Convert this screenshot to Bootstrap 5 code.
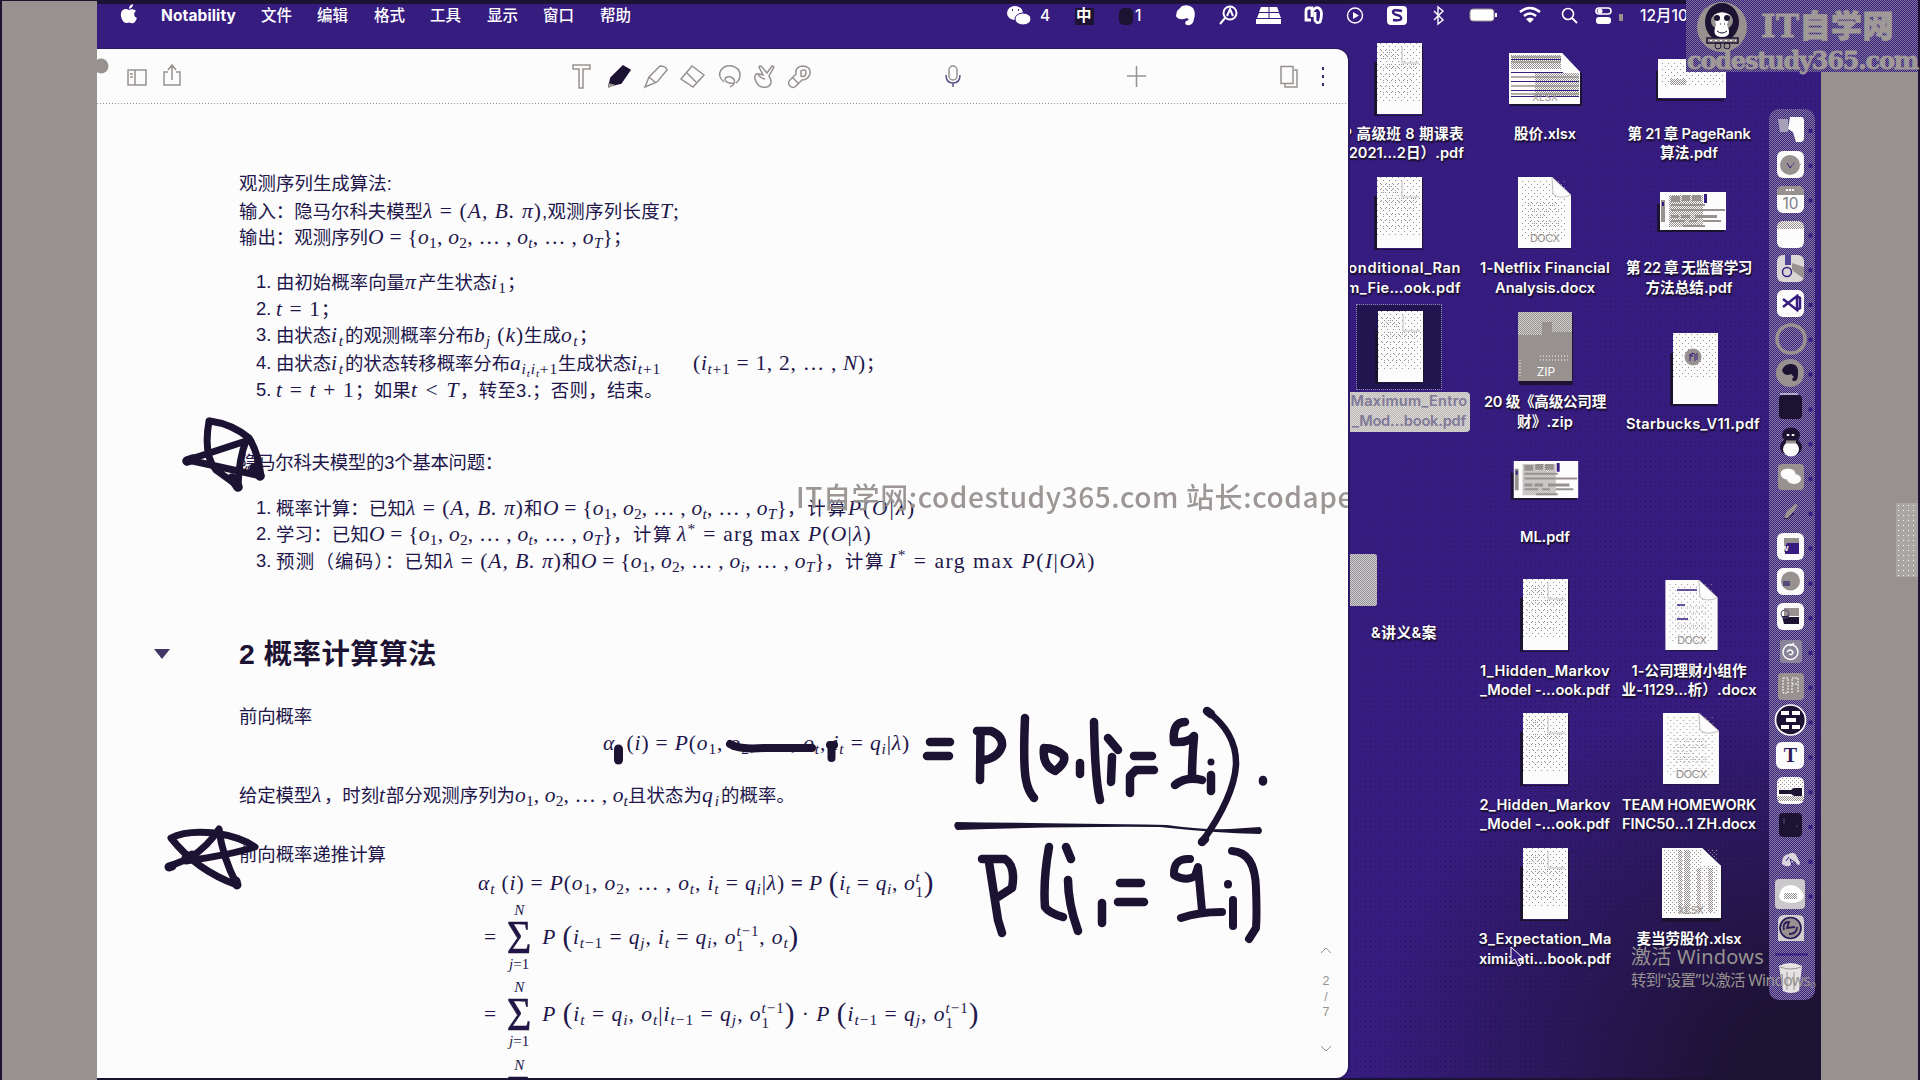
<!DOCTYPE html>
<html lang="zh-CN">
<head>
<meta charset="utf-8">
<title>Notability</title>
<link href="https://cdn.jsdelivr.net/npm/bootstrap@5.3.0/dist/css/bootstrap.min.css" rel="stylesheet">
<style>
:root{--ink:#1c1232;--violet:#371c80;--ash:#979290;--paper:#fcfcfc}
body{margin:0;overflow:hidden;background:var(--ink);font-family:"Liberation Sans","Noto Sans CJK SC",sans-serif;color:#21154a}
.stage{width:1920px;height:1080px;overflow:hidden;padding:0 2px;background:var(--ink)}
.side-l{width:95px;margin-top:1px;background:var(--ash)}
.side-r{width:97px;background:var(--ash)}
.side-handle{width:22px;height:74px;margin-top:503px;background-color:#aaa6a4;background-image:radial-gradient(circle,#fcfcfc 0 .7px,transparent .8px);background-size:5px 5px}
.screen{width:1724px;height:1078px;border-top:4px solid var(--ink);background-color:var(--violet);overflow:hidden}
.topmenu{height:45px;font:500 15.5px/23px Inter,"Noto Sans CJK SC",sans-serif;color:#fff}
.topmenu>*{position:absolute;white-space:nowrap}
.note-win{width:1251px;height:1029px;background:var(--paper);border-radius:0 12px 12px 0;z-index:2;overflow:hidden;box-shadow:1px 0 0 1px #2a1765}
.toolbar-svg{height:55px;width:1251px;display:block}
.sheet{padding:67px 0 0 142px}
.ln{height:26.6px;line-height:26.6px;font-size:18.4px;white-space:nowrap}
.no{width:20px;margin-left:17px;flex:none}
.fit{display:inline-block;white-space:nowrap}
.m{font-family:"Liberation Serif","Noto Sans CJK SC",serif;font-size:21.5px;line-height:26px}
.m sub,.m sup{font-size:.72em}
.m big{font-size:1.35em;font-weight:400;line-height:0;vertical-align:-2px}
.stk{display:inline-flex;flex-direction:column;font-size:.7em;line-height:15px;vertical-align:8px;height:16px}
.g1{margin-top:18.2px}.g2{margin-top:46.4px}.g3{margin-top:29.4px}.g4{margin-top:25px}.g5{margin-top:33.6px}.g6{margin-top:1.6px}
.ttl{margin-top:60px;height:40px;line-height:40px;font-size:28.4px;font-weight:700;color:var(--ink)}
.tri{width:0;border:8px solid transparent;border-top:10px solid #403565;border-bottom:0;margin:15px 69px 0 -85px}
.sums{padding-top:1px}
.sumrow{height:77.6px;margin-left:245px;line-height:26px}
.sumrow>.m{height:26px}
.sg{width:46px;text-align:center}
.sg small,.sg span{display:block;font-family:"Liberation Serif",serif}
.sg small{font-size:15px;line-height:20px}
.sg span{font-size:47px;line-height:34px;transform:scaleX(.9);-webkit-text-stroke:.5px var(--ink)}
.ink{position:absolute;left:-97px;top:-49px;pointer-events:none}
.files{margin:-6px 0 0 -19px;z-index:1}
.fcol{width:144px;flex:none}
.fcol.first{position:relative;left:-2px}
.fcol.last .pic{padding-left:5px}
.file{height:134.2px;text-align:center;color:#fff;font:600 14.6px/19.4px Inter,"Noto Sans CJK SC",sans-serif;text-shadow:0 1px 2px #1c1232,1px 2px 1px #1c1232}
.file .pic{height:71px;margin-bottom:11px}
.file svg{overflow:visible;text-shadow:none}
.half{padding-top:100px;height:230px}
.pick svg{outline:1px dotted #8f89a6;outline-offset:0;background:#21154f}
.pick .lbl{background:repeating-conic-gradient(#b9b5b3 0 25%,#dedcdb 0 50%) 0 0/2px 2px;color:#7f7896;text-shadow:none;display:block;width:122px;height:40px;margin:-1px 0 0 21px;border-radius:0 4px 4px 0}
.dock{width:46px;height:891px;margin:60px 6px 0 8px;border-radius:10px;background:repeating-conic-gradient(#371c80 0 25%,#8b84a0 0 50%) 0 0/2px 2px}
.shade{position:absolute;right:0;top:0;width:473px;height:1078px;background-image:radial-gradient(circle,#1c1232 0 .8px,transparent .9px);background-size:5px 5px;-webkit-mask-image:linear-gradient(120deg,transparent 15%,rgba(0,0,0,.8) 60%);mask-image:linear-gradient(120deg,transparent 15%,rgba(0,0,0,.8) 60%)}
.shade2{position:absolute;right:0;bottom:0;width:473px;height:420px;background:radial-gradient(ellipse at 100% 100%,#1c1232 12%,rgba(28,18,50,0) 68%)}
.wm{position:absolute;color:var(--ash);white-space:nowrap;z-index:5}
.wm-mid{left:796px;top:474px;width:552px;height:44px;overflow:hidden;font:500 28px/44px "Noto Sans CJK SC",sans-serif;opacity:.95}
.wm-a{left:1631px;top:944px;font:20px/26px "Noto Sans","Noto Sans CJK SC",sans-serif}
.wm-b{left:1631px;top:970px;font:15.5px/20px "Noto Sans","Noto Sans CJK SC",sans-serif}
.logo{position:absolute;left:1686px;top:0;width:232px;height:72px;z-index:6;background:repeating-conic-gradient(#371c80 0 25%,#7f7896 0 50%) 0 0/2px 2px;color:#9f9a98}
.logo-a{position:absolute;left:75px;top:5px;font:900 31px/42px "DejaVu Serif","Noto Sans CJK SC",serif;-webkit-text-stroke:.8px #9f9a98}
.logo-b{position:absolute;left:1px;top:49px;font:700 24px/24px "DejaVu Serif",serif;-webkit-text-stroke:.8px #9f9a98}
.pager{position:absolute;right:14px;top:890px;width:16px;color:var(--ash);font-size:12.5px;line-height:15.5px;text-align:center}
</style>
<script src="https://cdn.jsdelivr.net/npm/bootstrap@5.3.0/dist/js/bootstrap.bundle.min.js"></script>
</head>
<body>
<svg width="0" height="0" class="position-absolute">
<defs>
<pattern id="pa" width="4" height="4" patternUnits="userSpaceOnUse"><rect width="1" height="1" fill="#979290"/><rect x="2" y="2" width="1" height="1" fill="#979290"/></pattern>
<pattern id="pb" width="6" height="6" patternUnits="userSpaceOnUse"><rect x="1" y="1" width="1" height="1" fill="#979290"/><rect x="4" y="4" width="1" height="1" fill="#979290"/></pattern>
<pattern id="pc" width="2" height="2" patternUnits="userSpaceOnUse"><rect width="1" height="1" fill="#979290"/><rect x="1" y="1" width="1" height="1" fill="#979290"/></pattern>
<symbol id="pdf" viewBox="0 0 52 74"><path fill="#1c1232" d="M1 20h4v53h44v-70h1v71H1z"/><path fill="#fcfcfc" d="M4 1h45v71H4z"/><path fill="url(#pa)" d="M8 8h18v10H8zM8 22h36v6H8zM8 31h36v3H8zM8 37h34v3H8zM8 43h32v3H8zM8 49h30v3H8z"/><path fill="url(#pb)" d="M4 1h45v60H4z"/><path d="M29 5v16h17" fill="none" stroke="#c0bcba"/></symbol>
<symbol id="docx" viewBox="0 0 54 72"><path fill="#1c1232" opacity=".7" d="M1 2h34l18 18v52H1z"/><path fill="#fcfcfc" d="M0 0h34l19 18v53H0z"/><path fill="url(#pb)" d="M4 4h45v60H4z"/><path fill="url(#pa)" d="M10 26h32v3H10zM10 32h32v3H10zM10 38h20v3H10zM10 44h32v6H10z"/><path fill="#fcfcfc" stroke="#aaa5a3" stroke-width=".7" d="M34 0l19 18q-12 5-18-1z"/><text x="27" y="65" font-family="Inter,sans-serif" font-size="11" font-weight="400" text-anchor="middle" fill="#979290" textLength="30">DOCX</text></symbol>
<symbol id="wide" viewBox="0 0 70 42"><path fill="#1c1232" d="M0 12h3v26h64v2H0z"/><path fill="#fcfcfc" d="M3 0h66v38H3z"/><path fill="#979290" d="M4 8h4v22H4zM14 4h9v6h-9zM25 3h8v6h-8zM35 3h9v6h-9zM14 12h34v2H14zM14 17h54v2H14zM14 23h8v3h-8zM24 23h9v3h-9zM38 23h22v3H38zM14 28h14v2H14zM32 28h8v2h-8zM46 28h18v2H46zM26 33h22v2H26z"/><path fill="url(#pc)" d="M12 3h34v32H12z"/><path fill="#371c80" d="M47 2h3v9h-3zM5 10h2v4H5z"/></symbol>
</defs>
</svg>
<div class="stage d-flex position-relative">
<div class="side-l"></div>
<div class="screen position-relative">
<div class="shade"></div><div class="shade2"></div>
<div class="topmenu position-relative">
<svg style="left:-97px;top:-4px" width="1820" height="30" fill="#fff">
<path d="M137 18c-2 5-4 6-6 5q-2-1-4 0c-3 1-7-5-6-10 1-4 5-5 8-3 2-1 5-1 7 1-3 2-2 6 1 7zM129 9q0-4 4-5 0 4-4 5z"/>
<ellipse cx="1015" cy="13" rx="8" ry="7"/><ellipse cx="1023" cy="19" rx="8" ry="6" stroke="#371c80"/><path d="M1012 10h1M1018 10h1" stroke="#371c80" stroke-width="2"/>
<rect x="1075" y="8" width="19" height="17" fill="#1c1232"/><rect x="1119" y="8" width="14" height="17" rx="5" fill="#1c1232"/>
<path d="M1177 11l5-5q7-2 11 2 3 5 1 11-1 7-7 6-3-1-1-4l3-1-2-2-3 1q-6 1-8-3z"/>
<g fill="none" stroke="#fff" stroke-width="2"><circle cx="1230" cy="13" r="6.500"/><path d="M1225 18l-5 6M1227 16l3-7 3 7"/><path d="M1311 20h-5V11q0-3 3-3h3v9M1312 12q4-7 8-3 3 4 0 13-4 2-5-2v-8" stroke-width="2.800"/><circle cx="1355" cy="15.500" r="7.500" stroke-width="1.400"/><path d="M1434 11l9 9-5 4V7l5 4-9 9" stroke-width="1.400"/><path d="M1520 12q10-8 20 0M1524 16q6-5 12 0" stroke-width="2.600"/><circle cx="1568" cy="14" r="5.500" stroke-width="1.600"/><path d="M1572 18l5 5" stroke-width="1.800"/><rect x="1596" y="8" width="15" height="6" rx="3" stroke-width="1.600"/></g>
<path d="M1261 7h16l2 5h-20zM1259 13h20l2 5h-24zM1256 19h25v5h-25z"/><path d="M1269 7v11" stroke="#371c80"/>
<path d="M1353 12l6 3.500-6 3.500zM1526 19q4-3 8 0l-4 4z"/><rect x="1387" y="6" width="20" height="19" rx="4"/><path d="M1402 11q-9-2-9 1 0 2 4 3 5 1 4 4-1 2-8 1" fill="none" stroke="#371c80" stroke-width="2.400"/>
<rect x="1470" y="9" width="24" height="12" rx="3" stroke="#979290"/><path d="M1496 13v4" stroke="#fff" stroke-width="2"/><rect x="1596" y="17" width="15" height="7" rx="3"/><circle cx="1600" cy="11" r="2.500"/><rect x="1619" y="14" width="4" height="7" fill="#979290"/>
</svg>
<b class="fit" style="left:64px" data-w="75">Notability</b><span style="left:164px">文件</span><span style="left:220px">编辑</span><span style="left:277px">格式</span><span style="left:333px">工具</span><span style="left:390px">显示</span><span style="left:446px">窗口</span><span style="left:503px">帮助</span>
<span style="left:943px">4</span><b style="left:979px">中</b><span style="left:1038px">1</span><span style="left:1543px">12月10日</span>
</div>
<div class="d-flex align-items-start">
<main class="note-win position-relative flex-shrink-0">
<svg class="toolbar-svg" viewBox="97 49 1251 55" fill="none" stroke="#979290" stroke-width="1.500">
<circle cx="101" cy="66" r="7.500" fill="#979290" stroke="none"/>
<path d="M128 70h18v15h-18zM135 70v15M130 74h3M130 77h3M168 72h-4v13h16V72h-4M172 80V66M168 70l4-5 4 5"/>
<path d="M573 65h17v4h-7v19h-4V69h-6z"/><path d="M609 86l2-8 12-12 7 4-9 13z" fill="#1c1232" stroke="#1c1232"/><path d="M609 84l4 1-4 2z" fill="#fff"/>
<path d="M645 87l4-10 11-11q6 0 7 4l-10 12zM649 77l7 6M681 79l11-13 12 9-11 12zM687 73l9 9"/>
<path d="M724 82q-7-6-3-12 4-5 11-4 8 2 8 9 0 5-4 8M725 80q0-4 6-3 6 3 2 8l-3 2M725 80q2 4 9 3"/>
<path d="M755 79q-1-6 4-5l4 1-4-8q1-2 3 0l5 6 5-7q3 0 1 3l-4 7q5 8-2 11-9 2-12-8zM758 75q4 4 7 4"/>
<path d="M790 86q-3-3 0-6l6-6q-1-7 6-8 9 0 8 8-2 6-8 6l-6 6q-3 3-6 0zM801 71q5-3 5 2-1 5-5 3zM793 78l5 5"/>
<rect x="949" y="66" width="8" height="14" rx="4"/><path d="M946 75q0 8 7 8t7-8M953 83v4" stroke="#5d5288"/>
<path d="M1127 76h19M1136.500 66v21M1281 66.500h12v17h-12zM1294 70h3v17h-12v-3"/>
<path d="M1323 67v3M1323 75v3M1323 83v3" stroke="#372a66" stroke-width="2"/><path d="M97 103.500h1251" stroke-width="1" stroke-dasharray="1 2"/>
</svg>
<div class="sheet">
<div class="ln"><span class="fit" data-w="153">观测序列生成算法:</span></div>
<div class="ln"><span class="fit" data-w="184">输入：隐马尔科夫模型</span><span class="fit m" data-w="119"><i>λ</i> = (<i>A, B. π</i>)</span><span class="fit" data-w="118">,观测序列长度</span><span class="fit m" data-w="20"><i>T</i>;</span></div>
<div class="ln"><span class="fit" data-w="129">输出：观测序列</span><span class="fit m" data-w="245"><i>O</i> = {<i>o</i><sub>1</sub>, <i>o</i><sub>2</sub>, … , <i>o<sub>t</sub></i>, … , <i>o<sub>T</sub></i>}</span>；</div>
<div class="g1">
<div class="ln d-flex"><span class="no">1.</span><div><span class="fit" data-w="129">由初始概率向量</span><i class="fit m" data-w="13">π</i><span class="fit" data-w="73">产生状态</span><span class="fit m" data-w="16"><i>i</i><sub>1</sub></span>；</div></div>
<div class="ln d-flex"><span class="no">2.</span><div><span class="fit m" data-w="45"><i>t</i> = 1</span>；</div></div>
<div class="ln d-flex"><span class="no">3.</span><div><span class="fit" data-w="55">由状态</span><i class="fit m" data-w="14">i<sub>t</sub></i><span class="fit" data-w="129">的观测概率分布</span><span class="fit m" data-w="50"><i>b<sub>j</sub></i> (<i>k</i>)</span><span class="fit" data-w="37">生成</span><i class="fit m" data-w="18">o<sub>t</sub></i>；</div></div>
<div class="ln d-flex g6"><span class="no">4.</span><div><span class="fit" data-w="55">由状态</span><i class="fit m" data-w="14">i<sub>t</sub></i><span class="fit" data-w="165">的状态转移概率分布</span><span class="fit m" data-w="48"><i>a<sub>i<sub>t</sub>i<sub>t</sub></sub></i><sub>+1</sub></span><span class="fit" data-w="73">生成状态</span><span class="fit m me-4" data-w="30"><i>i<sub>t</sub></i><sub>+1</sub></span><span class="ms-2 fit m" data-w="173">(<i>i<sub>t</sub></i><sub>+1</sub> = 1, 2, … , <i>N</i>)</span>；</div></div>
<div class="ln d-flex"><span class="no">5.</span><div><span class="fit m" data-w="79"><i>t</i> = <i>t</i> + 1</span><span class="fit" data-w="56">；如果</span><span class="fit m" data-w="49"><i>t</i> &lt; <i>T</i></span><span class="fit" data-w="203">，转至3.；否则，结束。</span></div></div>
</div>
<div class="ln g2"><span class="fit" data-w="264">隐马尔科夫模型的3个基本问题：</span></div>
<div class="g1">
<div class="ln d-flex"><span class="no">1.</span><div><span class="fit" data-w="130">概率计算：已知</span><span class="fit m" data-w="118"><i>λ</i> = (<i>A, B. π</i>)</span><span class="fit" data-w="19">和</span><span class="fit m" data-w="244"><i>O</i> = {<i>o</i><sub>1</sub>, <i>o</i><sub>2</sub>, … , <i>o<sub>t</sub></i>, … , <i>o<sub>T</sub></i>}</span><span class="fit" data-w="61">，计算</span><span class="fit m" data-w="68"><i>P</i>(<i>O</i>|<i>λ</i>)</span></div></div>
<div class="ln d-flex"><span class="no">2.</span><div><span class="fit" data-w="93">学习：已知</span><span class="fit m" data-w="244"><i>O</i> = {<i>o</i><sub>1</sub>, <i>o</i><sub>2</sub>, … , <i>o<sub>t</sub></i>, … , <i>o<sub>T</sub></i>}</span><span class="fit me-1" data-w="60">，计算</span><span class="fit m" data-w="195"><i>λ</i><sup>*</sup> = arg max <i>P</i>(<i>O</i>|<i>λ</i>)</span></div></div>
<div class="ln d-flex"><span class="no">3.</span><div><span class="fit" data-w="168">预测（编码）：已知</span><span class="fit m" data-w="118"><i>λ</i> = (<i>A, B. π</i>)</span><span class="fit" data-w="19">和</span><span class="fit m" data-w="244"><i>O</i> = {<i>o</i><sub>1</sub>, <i>o</i><sub>2</sub>, … , <i>o<sub>i</sub></i>, … , <i>o<sub>T</sub></i>}</span><span class="fit me-1" data-w="60">，计算</span><span class="fit m" data-w="207"><i>I</i><sup>*</sup> = arg max <i>P</i>(<i>I</i>|<i>Oλ</i>)</span></div></div>
</div>
<div class="ttl d-flex"><div class="tri"></div><span class="fit" data-w="198">2 概率计算算法</span></div>
<div class="ln g3"><span class="fit" data-w="73">前向概率</span></div>
<div class="ln" style="padding-left:364px"><span class="fit m" data-w="307"><i>α<sub>t</sub></i> (<i>i</i>) = <i>P</i>(<i>o</i><sub>1</sub>, <i>o</i><sub>2</sub>, … , <i>o<sub>t</sub></i>, <i>i<sub>t</sub></i> = <i>q<sub>i</sub></i>|<i>λ</i>)</span></div>
<div class="ln g4"><span class="fit" data-w="73">给定模型</span><i class="fit m" data-w="12">λ</i><span class="fit" data-w="55">，时刻</span><i class="fit m" data-w="7">t</i><span class="fit" data-w="129">部分观测序列为</span><span class="fit m" data-w="113"><i>o</i><sub>1</sub>, <i>o</i><sub>2</sub>, … , <i>o<sub>t</sub></i></span><span class="fit" data-w="74">且状态为</span><i class="fit m" data-w="19">q<sub>i</sub></i><span class="fit" data-w="74">的概率。</span></div>
<div class="ln g5"><span class="fit" data-w="147">前向概率递推计算</span></div>
<div class="ln g6" style="padding-left:239px"><span class="fit m" data-w="307"><i>α<sub>t</sub></i> (<i>i</i>) = <i>P</i>(<i>o</i><sub>1</sub>, <i>o</i><sub>2</sub>, … , <i>o<sub>t</sub></i>, <i>i<sub>t</sub></i> = <i>q<sub>i</sub></i>|<i>λ</i>)</span><b class="fit m text-center" data-w="24">&nbsp;=&nbsp;</b><span class="fit m" data-w="125"><i>P</i> <big>(</big><i>i<sub>t</sub></i> = <i>q<sub>i</sub></i>, <i>o</i><span class="stk"><i>t</i><span>1</span></span><big>)</big></span></div>
<div class="sums">
<div class="sumrow d-flex align-items-center"><span class="m">=</span><div class="sg"><small><i>N</i></small><span>Σ</span><small><i>j</i>=1</small></div><span class="fit m" data-w="257"><i>P</i> <big>(</big><i>i<sub>t</sub></i><sub>−1</sub> = <i>q<sub>j</sub></i>, <i>i<sub>t</sub></i> = <i>q<sub>i</sub></i>, <i>o</i><span class="stk"><span><i>t</i>−1</span><span>1</span></span>, <i>o<sub>t</sub></i><big>)</big></span></div>
<div class="sumrow d-flex align-items-center"><span class="m">=</span><div class="sg"><small><i>N</i></small><span>Σ</span><small><i>j</i>=1</small></div><span class="fit m" data-w="437"><i>P</i> <big>(</big><i>i<sub>t</sub></i> = <i>q<sub>i</sub></i>, <i>o<sub>t</sub></i>|<i>i<sub>t</sub></i><sub>−1</sub> = <i>q<sub>j</sub></i>, <i>o</i><span class="stk"><span><i>t</i>−1</span><span>1</span></span><big>)</big> · <i>P</i> <big>(</big><i>i<sub>t</sub></i><sub>−1</sub> = <i>q<sub>j</sub></i>, <i>o</i><span class="stk"><span><i>t</i>−1</span><span>1</span></span><big>)</big></span></div>
<div class="sumrow d-flex align-items-center"><span class="m">=</span><div class="sg"><small><i>N</i></small><span>Σ</span><small><i>j</i>=1</small></div></div>
</div>
</div>
<svg class="ink" width="1348" height="1080" fill="none" stroke="#1c1232" stroke-width="8.500" stroke-linecap="round" stroke-linejoin="round">
<g stroke-width="7"><path d="M209 421Q203 455 216 470L238 486Q239 458 246 441L188 460L261 476Q258 452 249 438Q232 424 210 421"/><path d="M187 461l6-2M238 487l-6-9M260 476l-6-8" stroke-width="9.500"/>
<path d="M170 866L190 858Q209 845 219 829Q222 856 237 885Q196 870 171 838Q186 830 215 833Q241 837 255 847Q230 855 186 861"/><path d="M169 867l3-1M186 858l6-3M237 885l-1-4" stroke-width="9"/></g>
<path d="M618.500 749V760" stroke-width="9"/><path d="M730 744Q740 750 764 748H812" stroke-width="8"/><path d="M831.500 745v13M830 745h4" stroke-width="8"/>
<path d="M930 742h20M927 756h22M977 731h14Q1003 736 1002 746Q998 758 984 760M980.500 732L980 780M1025 718Q1023 765 1026 780Q1028 791 1034 798M1044 748Q1042 765 1055 771Q1066 763 1064 756Q1056 748 1044 748M1080 763v11M1094 722Q1095 780 1100 800M1108 738l10 12M1112 757l-1 25M1134 756h18M1130 793V776L1136 770H1154"/>
<path d="M1185 722Q1172 722 1174 742Q1189 743 1194 736Q1192 760 1192 778M1175 785Q1186 776 1202 780M1211 775v16M1263 780v1.500"/><circle cx="1211" cy="762" r="3.500" fill="#1c1232" stroke="none"/>
<path d="M1207 711Q1237 733 1236 765Q1234 797 1202 842" stroke-width="6.500"/><path d="M1202 842l3-3M1207 711l4 3"/>
<path d="M956 822Q1030 823 1167 825Q1200 830 1230 829L1260 827Q1264 831 1260 834Q1215 833 1160 827Q1080 826 957 830Q952 826 956 822z" fill="#1c1232" stroke="none"/>
<path d="M982 859H1005Q1016 866 1012 888L998 897M989 862Q994 895 998 920L1002 933M1049 847Q1043 880 1045 907Q1049 913 1063 917M1066 847l5 12M1068 880Q1068 903 1078 931M1102 903v20M1120 883h21M1118 902h26"/>
<path d="M1190 859Q1173 858 1174 875Q1186 882 1195 876L1198 867Q1200 890 1202 911M1181 918Q1198 912 1222 912M1228 884v.5M1233 900v26M1232 851Q1255 852 1256 888Q1257 915 1256 928L1249 939" stroke-width="8"/>
</svg>
<div class="pager"><svg width="12" height="7" fill="none" stroke="#979290" class="d-block mx-auto mt-2"><path d="M1 6l5-5 5 5"/></svg><div class="mt-3 pt-1">2<br>/<br>7</div><svg width="12" height="7" fill="none" stroke="#979290" class="d-block mx-auto mt-4"><path d="M1 1l5 5 5-5"/></svg></div>
</main>
<div class="files d-flex position-relative">
<div class="fcol first">
<div class="file"><div class="pic d-flex align-items-center justify-content-center"><svg width="52" height="74"><use href="#pdf"/></svg></div><span class="fit" data-w="130">LP 高级班 8 期课表</span><br><span class="fit" data-w="130">（2021…2日）.pdf</span></div>
<div class="file"><div class="pic d-flex align-items-center justify-content-center"><svg width="52" height="74"><use href="#pdf"/></svg></div><span class="fit" data-w="124">Conditional_Ran</span><br><span class="fit" data-w="124">om_Fie…ook.pdf</span></div>
<div class="file pick"><div class="pic d-flex align-items-center justify-content-center"><svg width="84" height="84"><use href="#pdf" x="17" y="5" width="52" height="74"/></svg></div><div class="lbl"><span class="fit" data-w="117">Maximum_Entro</span><br><span class="fit" data-w="114">_Mod…book.pdf</span></div></div>
<div class="file half"><div class="pic d-flex align-items-center" style="padding-left:5px"><svg width="46" height="54"><rect width="45" height="52" rx="3" fill="#cfcdd6"/><rect width="45" height="52" rx="3" fill="url(#pc)"/></svg></div><span class="fit" style="margin-left:10px;position:relative;top:-4px" data-w="66">&amp;讲义&amp;案</span></div>
</div>
<div class="fcol">
<div class="file"><div class="pic d-flex align-items-center justify-content-center"><svg width="72" height="52"><path fill="#1c1232" d="M1 2h54l18 19v32H1z"/><path fill="#fcfcfc" d="M0 0h53l18 19v32H0z"/><path fill="url(#pc)" d="M2 2h50v14H2zM26 20h44v24H26z"/><path stroke="#979290" stroke-width="1.500" d="M2 4h50M2 9h50M2 24h68M2 33h68M2 41h68"/><path stroke="#371c80" d="M2 6.500h50M2 19.500h52M2 28.500h68M2 37.500h68M2 43.500h68"/><path fill="#fcfcfc" d="M53 0l18 19H53z"/><text x="36" y="48" text-anchor="middle" font-size="10" font-weight="400" fill="#979290">XLSX</text></svg></div><span class="fit" data-w="62">股价.xlsx</span></div>
<div class="file"><div class="pic d-flex align-items-center justify-content-center"><svg width="54" height="72"><use href="#docx"/></svg></div><span class="fit" data-w="130">1-Netflix Financial</span><br><span class="fit" data-w="100">Analysis.docx</span></div>
<div class="file"><div class="pic d-flex align-items-center justify-content-center"><svg width="54" height="70"><path fill="#1c1232" d="M1 2h54v71H1z"/><path fill="#979290" d="M0 0h54v69H0z"/><path fill="#d3d1d0" d="M0 0h54v20H34V10H24v13H0z"/><path fill="url(#pc)" d="M0 0h54v23H0z"/><path stroke="#fcfcfc" stroke-dasharray="1 2" d="M22 44h28M22 48h28M2 48v18"/><text x="28" y="64" text-anchor="middle" font-size="12" font-weight="400" fill="#fcfcfc">ZIP</text></svg></div><span class="fit" data-w="122">20 级《高级公司理</span><br><span class="fit" data-w="56">财》.zip</span></div>
<div class="file"><div class="pic d-flex align-items-center justify-content-center"><svg width="70" height="41"><use href="#wide"/></svg></div><span class="fit" data-w="50">ML.pdf</span></div>
<div class="file"><div class="pic d-flex align-items-center justify-content-center"><svg width="52" height="74"><use href="#pdf"/></svg></div><span class="fit" data-w="130">1_Hidden_Markov</span><br><span class="fit" data-w="130">_Model -…ook.pdf</span></div>
<div class="file"><div class="pic d-flex align-items-center justify-content-center"><svg width="52" height="74"><use href="#pdf"/></svg></div><span class="fit" data-w="131">2_Hidden_Markov</span><br><span class="fit" data-w="130">_Model -…ook.pdf</span></div>
<div class="file"><div class="pic d-flex align-items-center justify-content-center"><svg width="52" height="74"><use href="#pdf"/></svg></div><span class="fit" data-w="133">3_Expectation_Ma</span><br><span class="fit" data-w="132">ximizati…book.pdf</span></div>
</div>
<div class="fcol last">
<div class="file"><div class="pic d-flex align-items-center justify-content-center"><svg width="68" height="40"><path fill="#1c1232" d="M-2 12h4v28h64v2H-2z"/><path fill="#fcfcfc" d="M0 0h68v39H0z"/><path fill="url(#pb)" d="M2 2h64v24H2z"/><path fill="url(#pc)" d="M12 20h16v6H12z"/></svg></div><span class="fit" data-w="123">第 21 章 PageRank</span><br><span class="fit" data-w="58">算法.pdf</span></div>
<div class="file"><div class="pic d-flex align-items-center justify-content-center"><svg width="70" height="42"><use href="#wide"/></svg></div><span class="fit" data-w="126">第 22 章 无监督学习</span><br><span class="fit" data-w="87">方法总结.pdf</span></div>
<div class="file" style="padding:22px 0 0 8px"><div class="pic d-flex align-items-center justify-content-center"><svg width="47" height="72"><path fill="#1c1232" d="M-2 20h3v51h44v2H-2z"/><path fill="#fcfcfc" d="M1 0h45v71H1z"/><path fill="url(#pb)" d="M1 0h45v46H1z"/><circle cx="21" cy="24" r="8.500" fill="#979290"/><path d="M18 28v-7l2 3v-4l3 1v7M25 20v7" stroke="#371c80" fill="none"/></svg></div><span class="fit" data-w="134">Starbucks_V11.pdf</span></div>
<div class="file"></div>
<div class="file"><div class="pic d-flex align-items-center justify-content-center"><svg width="54" height="71"><use href="#docx" width="54" height="71"/><path stroke="#371c80" stroke-width="1.500" d="M12 10h20M12 25h8M12 39h11"/></svg></div><span class="fit" data-w="115">1-公司理财小组作</span><br><span class="fit" data-w="135">业-1129…析）.docx</span></div>
<div class="file"><div class="pic d-flex align-items-center justify-content-center"><svg width="57" height="72" viewBox="0 0 54 72" preserveAspectRatio="none"><use href="#docx" width="54" height="72"/></svg></div><span class="fit" data-w="134">TEAM HOMEWORK</span><br><span class="fit" data-w="134">FINC50…1 ZH.docx</span></div>
<div class="file"><div class="pic d-flex align-items-center justify-content-center"><svg width="59" height="71"><path fill="#1c1232" d="M0 2h41l19 18v54H0z"/><path fill="#fcfcfc" d="M0 0h40l19 18v52H0z"/><path fill="url(#pc)" d="M16 2h4v64h-4zM22 2h6v64h-6zM35 20h4v44h-4zM46 20h5v44h-5z"/><path fill="url(#pa)" d="M2 2h54v64H2z"/><path fill="#fcfcfc" d="M40 0l19 18H40z"/><text x="29" y="66" text-anchor="middle" font-size="10" font-weight="400" fill="#979290">XLSX</text></svg></div><span class="fit" data-w="105">麦当劳股价.xlsx</span></div>
</div>
</div>
<svg class="dock position-relative flex-shrink-0" viewBox="1769 109 46 891" style="z-index:1">
<g fill="#fcfcfc"><path d="M1790 117h11q3 0 3 4v17q0 4-4 4h-4l-3-10-5-3z"/><rect x="1777" y="151" width="27" height="27" rx="6"/><rect x="1777" y="186" width="27" height="27" rx="6"/><rect x="1777" y="221" width="27" height="27" rx="6"/><rect x="1777" y="255" width="27" height="27" rx="6" fill="#d9d7d6"/><rect x="1777" y="290" width="27" height="27" rx="6"/><rect x="1777" y="533" width="27" height="27" rx="6"/><rect x="1777" y="568" width="27" height="27" rx="6"/><rect x="1777" y="603" width="27" height="27" rx="6"/><rect x="1776" y="742" width="28" height="27" rx="6"/><rect x="1777" y="777" width="27" height="27" rx="6"/></g>
<path d="M1778 119h10v13h-8z" fill="#a5a0b8"/><circle cx="1790" cy="165" r="10" fill="#979290"/><path d="M1787 163l3 5 4-5" stroke="#371c80" fill="none"/><circle cx="1796" cy="165" r="5" fill="url(#pa)"/>
<path d="M1777 195v-3q0-6 6-6h15q6 0 6 6v3z" fill="#979290"/><text x="1790.500" y="209" font-family="Inter,sans-serif" font-size="15.500" text-anchor="middle" fill="#807a86">10</text><path d="M1786 190h9" stroke="#fff" stroke-width="2" stroke-dasharray="2 1"/>
<path d="M1777 227q1-6 7-6h13q6 0 7 6v2h-27z" fill="url(#pc)"/><path d="M1785 255h6v10h-6z" fill="#50449a"/><path d="M1792 263l12 4v12l-12-9z" fill="#979290"/><circle cx="1787" cy="272" r="4.500" fill="none" stroke="#371c80" stroke-width="1.500"/>
<path d="M1783 299l14 11V296l-14 11M1797 296l3 2v10l-3 2" fill="none" stroke="#371c80" stroke-width="2.500"/>
<circle cx="1791" cy="339" r="14" fill="none" stroke="#979290" stroke-width="3.500"/><circle cx="1790" cy="373" r="14" fill="#979290"/><path d="M1782 370q3-7 10-6 7 1 6 10 0 8-5 7-2-2 1-4l-3-3q-7 3-9-4z" fill="#1c1232"/>
<g fill="#1c1232"><rect x="1779" y="395" width="23" height="24" rx="4"/><rect x="1779" y="813" width="23" height="24" rx="4"/></g><path d="M1780 394h18" stroke="#fff"/>
<ellipse cx="1791" cy="447" rx="11" ry="9" fill="#1c1232"/><ellipse cx="1791" cy="435" rx="9" ry="7.500" fill="#1c1232"/><ellipse cx="1791" cy="449" rx="8" ry="7.500" fill="#fcfcfc"/><path d="M1788 434v2M1793 434v2" stroke="#fff" stroke-width="2.500"/><path d="M1786 442h10" stroke="#979290" stroke-width="3"/>
<rect x="1778" y="464" width="26" height="26" rx="4" fill="#979290"/><ellipse cx="1788" cy="474" rx="7.500" ry="5.500" fill="#fcfcfc"/><ellipse cx="1794" cy="479" rx="7" ry="5" fill="#fcfcfc"/>
<path d="M1784 518l3-7 8-7 3 1-4 6-6 7z" fill="#979290"/><path d="M1784 518l3 1 7-6" stroke="#1c1232" fill="none"/>
<path d="M1784 538h15v14h-15z" fill="#979290"/><path d="M1787 543h12v11h-14v-7z" fill="#371c80"/><text x="1781" y="551" font-size="8" font-weight="700" fill="#fff">W</text><circle cx="1790.500" cy="581" r="9.500" fill="#979290"/><path d="M1783 581h7v5h-7z" fill="#554b7c"/><path d="M1784 608h15v8h-15z" fill="#979290"/><path d="M1782 616h5l2-2v3h10v7h-15z" fill="#1c1232"/><circle cx="1785" cy="614" r="4" fill="none" stroke="#554b7c"/>
<rect x="1780" y="640" width="22" height="23" rx="3" fill="#8a849a"/><g fill="none" stroke="#fff" stroke-width="1.400"><circle cx="1790.500" cy="652" r="7.500"/><path d="M1787 652q3-4 6 0-1 4-4 2M1790 646l4-3"/></g>
<rect x="1778" y="673" width="26" height="27" rx="4" fill="#979290"/><path d="M1783 678h5v15h-5zM1792 693v-15h6v15M1792 684h6" fill="none" stroke="#fff" stroke-dasharray="2 1"/>
<circle cx="1790.500" cy="720" r="15" fill="#1c1232" stroke="#fcfcfc" stroke-width="1.700"/><path d="M1781 711h8v4h-8zM1792 711h8v4h-8zM1786 718h10v4h-10zM1781 725h8v4h-8zM1792 725h8v4h-8z" fill="#fff"/>
<text x="1790.500" y="762" font-family="Liberation Serif,serif" font-weight="700" font-size="20" text-anchor="middle" fill="#2a1a5a">T</text>
<path d="M1777 783q1-6 7-6h13q6 0 7 6v7h-27z" fill="url(#pa)"/><path d="M1779 790h12l3-2h8v8h-8l-3-2h-12z" fill="#1c1232"/><path d="M1777 796h27v5h-27z" fill="url(#pc)"/>
<path d="M1784 818v6M1796 826h2" stroke="#554b7c"/><path d="M1782 864q0-10 7-10 6-4 9 5 4 6 0 6-5-6-7 0-4 3-9-1z" fill="#d8d6dc"/><path d="M1786 861l3-4M1792 865l-2-6 6 4" stroke="#371c80" fill="none"/>
<rect x="1775" y="879" width="30" height="30" rx="4" fill="#cbc8cc"/><path d="M1779 896q2-11 12-11 10 1 13 11-2 7-13 7-12-1-12-7z" fill="#fff"/><rect x="1784" y="893" width="13" height="6" fill="url(#pc)"/>
<path d="M1778 941v-20q0-6 6-6h14q6 0 6 6v20z" fill="#d2d0ce"/><circle cx="1790.500" cy="928" r="10.500" fill="#979290" stroke="#2a1a5a" stroke-width="1.700"/><path d="M1784 930q-2-8 5-8l-2 6 8-1M1789 934q8 0 8-7" stroke="#2a1a5a" stroke-width="1.800" fill="none"/>
<path d="M1775 954.500h33" stroke="#371c80" stroke-width="2"/><path d="M1779 966q11-6 23 0l-3 25q-8 4-16 0z" fill="#e4e2e3"/><path d="M1780 967q11 4 21 0M1787 972v18M1794 972v18" stroke="#979290" fill="none"/>
<path d="M1810.500 129v780" stroke="#371c80" stroke-width="4" stroke-dasharray="4 30.800"/>
</svg>
</div>
</div>
<div class="side-r d-flex justify-content-end"><div class="side-handle"></div></div>
<div class="wm wm-mid"><span class="fit" data-w="570">IT自学网:codestudy365.com 站长:codaper</span></div>
<div class="wm wm-a"><span class="fit" data-w="133">激活 Windows</span></div>
<div class="wm wm-b"><span class="fit" data-w="194">转到“设置”以激活 Windows。</span></div>
<svg class="wm" style="left:1510px;top:946px" width="14" height="22"><path d="M1 1v15l4-3 3 7 3-1-3-6 5-1z" fill="#371c80" stroke="#fff"/></svg>
<div class="logo"><svg class="position-absolute" width="64" height="54"><ellipse cx="36" cy="27" rx="25" ry="25" fill="#979290"/><ellipse cx="36" cy="22" rx="17" ry="19" fill="#1c1232"/><ellipse cx="36" cy="21" rx="11" ry="9" fill="#979290"/><path d="M28 15q8-5 16 0l-3 10q6 12-5 12t-6-12z" fill="#fcfcfc"/><circle cx="31" cy="18" r="3" fill="#1c1232"/><circle cx="41" cy="18" r="3" fill="#1c1232"/><path d="M34 24h1M38 24h1M31 31q5 4 10 0" stroke="#1c1232" fill="none"/><rect x="21" y="38" width="31" height="5" fill="#979290" stroke="#1c1232" stroke-width="1.500"/><path d="M24 40.500h26" stroke="#fff" stroke-dasharray="2 3"/><circle cx="32" cy="46" r="3" fill="none" stroke="#1c1232"/><circle cx="41" cy="46" r="3" fill="none" stroke="#1c1232"/></svg>
<span class="logo-a fit" data-w="133">IT自学网</span><span class="logo-b fit" data-w="231">codestudy365.com</span></div>
</div>
<script>
document.querySelectorAll('.fit').forEach(function (el) {
  var w = +el.dataset.w, n = Math.max(1, el.textContent.length), s = 0;
  for (var k = 0; k < 5; k++) { s += (w - el.getBoundingClientRect().width) / n; el.style.letterSpacing = s + 'px'; }
  el.style.width = w + 'px';
});
</script>
</body>
</html>
